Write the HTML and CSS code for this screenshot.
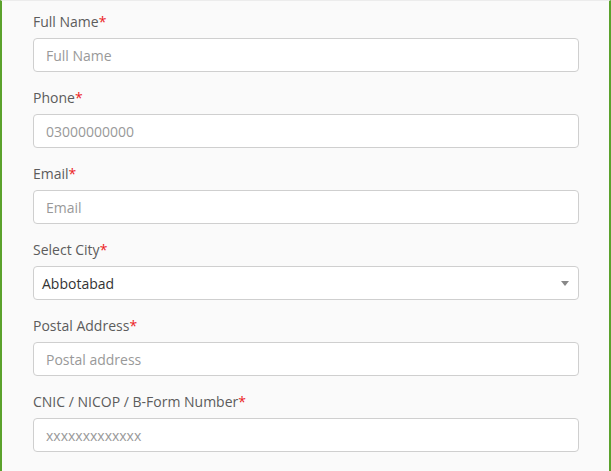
FILE: index.html
```html
<!DOCTYPE html>
<html>
<head>
<meta charset="utf-8">
<link rel="stylesheet" href="styles.css">
</head>
<body>
<div class="panel">
  <form class="form">
    <div class="field">
      <label class="label">Full Name<span class="req">*</span></label>
      <input class="input" type="text" placeholder="Full Name">
    </div>
    <div class="field">
      <label class="label">Phone<span class="req">*</span></label>
      <input class="input" type="text" placeholder="03000000000">
    </div>
    <div class="field">
      <label class="label">Email<span class="req">*</span></label>
      <input class="input" type="text" placeholder="Email">
    </div>
    <div class="field">
      <label class="label">Select City<span class="req">*</span></label>
      <div class="select">
        <span class="select-value">Abbotabad</span>
        <span class="caret"></span>
      </div>
    </div>
    <div class="field">
      <label class="label">Postal Address<span class="req">*</span></label>
      <input class="input" type="text" placeholder="Postal address">
    </div>
    <div class="field">
      <label class="label">CNIC / NICOP / B-Form Number<span class="req">*</span></label>
      <input class="input" type="text" placeholder="xxxxxxxxxxxxx">
    </div>
  </form>
</div>
</body>
</html>
```
FILE: styles.css
```css
html, body {
  margin: 0;
  padding: 0;
  background: #fafafa;
}
body {
  font-family: "Open Sans", "Liberation Sans", sans-serif;
  font-size: 14px;
}
.panel {
  box-sizing: border-box;
  width: 611px;
  height: 471px;
  border-left: 2px solid #5ba22c;
  border-right: 2px solid #5ba22c;
  border-top: 1px solid #ececec;
  background: #fafafa;
  overflow: hidden;
}
.form {
  display: flex;
  flex-direction: column;
  gap: 15px;
  padding: 10px 30px 0 31px;
}
.field {
  display: flex;
  flex-direction: column;
  gap: 7px;
}
.label {
  display: block;
  height: 20px;
  line-height: 22px;
  color: #5c5c5c;
  font-size: 14px;
}
.req {
  color: #ec1c24;
}
.input,
.select {
  box-sizing: border-box;
  width: 546px;
  height: 34px;
  border: 1px solid #cfcfcf;
  border-radius: 4px;
  background: #fff;
  font-family: "Open Sans", "Liberation Sans", sans-serif;
  font-size: 14px;
  color: #333;
  margin: 0;
}
.input {
  padding: 0 12px;
  outline: none;
}
.input::placeholder {
  color: #999;
}
.select {
  display: flex;
  align-items: center;
  justify-content: space-between;
  padding: 0 8px 0 8px;
}
.select-value {
  color: #333;
}
.caret {
  width: 0;
  height: 0;
  border-left: 4px solid transparent;
  border-right: 4px solid transparent;
  border-top: 5px solid #888;
  margin-right: 1px;
}
```
